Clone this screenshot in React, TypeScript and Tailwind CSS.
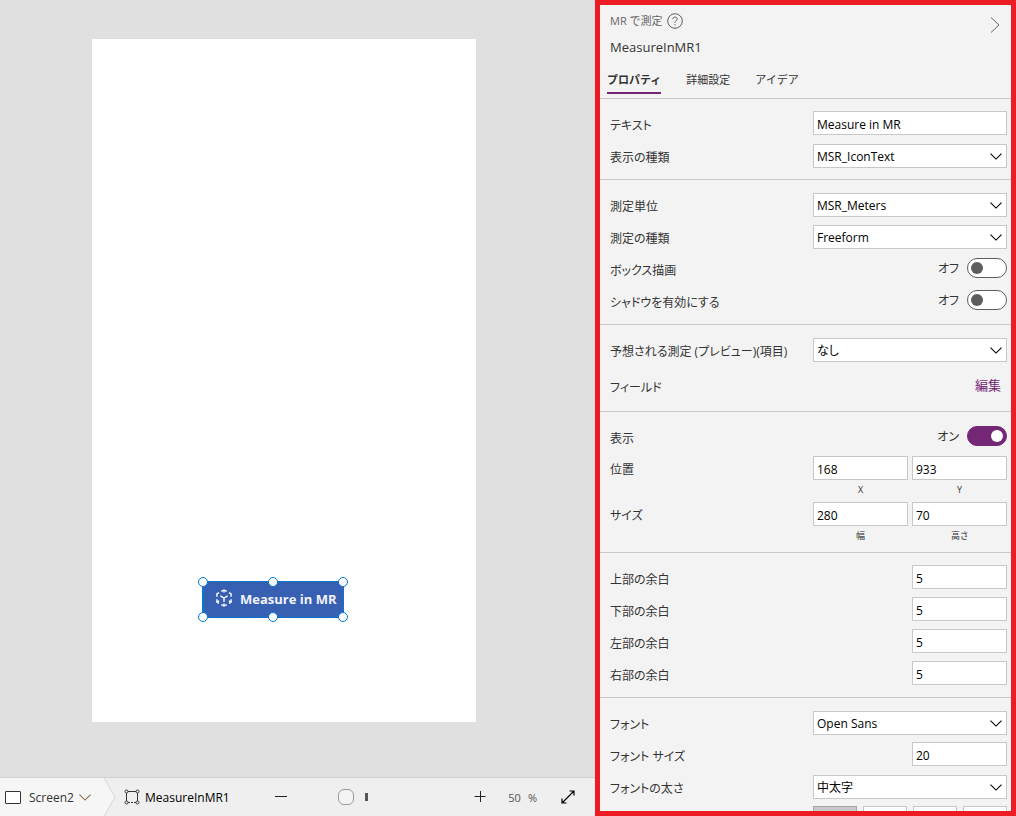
import { useId, useState, type ReactNode } from "react";
import clsx from "clsx";

const FONT = "font-['Open_Sans','Noto_Sans_CJK_JP',sans-serif]";

const TABS = ["プロパティ", "詳細設定", "アイデア"];

const PADDING_FIELDS = ["上部の余白", "下部の余白", "左部の余白", "右部の余白"];

const ALIGNMENTS = ["左揃え", "中央揃え", "右揃え", "両端揃え"];

const INPUT =
  "h-6 w-full min-w-0 border border-[#c8c8c8] bg-white px-[3px] pt-0.5 text-xs text-black outline-none focus:border-[#742774]";

// ── Icons ────────────────────────────────────────────────────────────────────

function ChevronDown({ className }: { className?: string }) {
  return (
    <svg viewBox="0 0 12 7" fill="none" stroke="currentColor" className={clsx("h-[7px] w-3", className)} aria-hidden>
      <path d="M0.5 0.7 6 6.1 11.5 0.7" strokeWidth="1.1" />
    </svg>
  );
}

function CubeIcon() {
  return (
    <svg viewBox="0 0 16 18" fill="none" stroke="#fff" strokeWidth="1.4" className="mb-1 h-[18px] w-4 shrink-0" aria-hidden>
      <path d="M5.3 2.4 8 1l2.7 1.4M13 3.6l2.1 1.2v2.9M15.1 10.3v2.9L13 14.4M10.7 15.6 8 17l-2.7-1.4M3 14.4.9 13.2v-2.9M.9 7.7V4.8L3 3.6" />
      <path d="M8 13V9M8 9 4.4 6.8M8 9l3.6-2.2M8 1v2.6M8 14.4V17M.9 13.2l2.2-1.3M15.1 13.2l-2.2-1.3" />
    </svg>
  );
}

function SelectionIcon() {
  return (
    <svg viewBox="0 0 16 16" fill="none" stroke="#333" className="size-4 shrink-0" aria-hidden>
      <path d="M4 2.5h8M2.5 4v8M13.5 4v8" />
      <path d="M4 13.5h8" strokeDasharray="2 1" />
      <circle cx="2.5" cy="2.5" r="1.5" />
      <circle cx="13.5" cy="2.5" r="1.5" />
      <circle cx="2.5" cy="13.5" r="1.5" />
      <circle cx="13.5" cy="13.5" r="1.5" />
    </svg>
  );
}

// ── Panel building blocks ────────────────────────────────────────────────────

function Section({ children }: { children: ReactNode }) {
  return <section className="border-t border-[#c8c8c8] pt-[9px] pr-1 pb-[7px] pl-2.5">{children}</section>;
}

function Row({ label, htmlFor, children }: { label: string; htmlFor: string; children: ReactNode }) {
  return (
    <div className="flex h-8 items-center justify-between">
      <label htmlFor={htmlFor} className="pt-[3px]">
        {label}
      </label>
      {children}
    </div>
  );
}

function TextRow({ label, value, wide }: { label: string; value: string; wide?: boolean }) {
  const id = useId();
  return (
    <Row label={label} htmlFor={id}>
      <div className={clsx("mb-0.5 flex", wide ? "w-[194px]" : "w-[95px]")}>
        <input id={id} defaultValue={value} className={INPUT} />
      </div>
    </Row>
  );
}

function SelectRow({ label, value }: { label: string; value: string }) {
  const id = useId();
  return (
    <Row label={label} htmlFor={id}>
      <div className="relative flex w-[194px]">
        <select id={id} defaultValue={value} className={clsx(INPUT, "appearance-none")}>
          <option>{value}</option>
        </select>
        <ChevronDown className="pointer-events-none absolute top-[9px] right-[5px] text-black" />
      </div>
    </Row>
  );
}

function ToggleRow({ label, initial }: { label: string; initial: boolean }) {
  const id = useId();
  const [on, setOn] = useState(initial);
  return (
    <Row label={label} htmlFor={id}>
      <div className="mb-0.5 flex items-center gap-2">
        <span className="pt-0.5">{on ? "オン" : "オフ"}</span>
        <input
          id={id}
          type="checkbox"
          role="switch"
          checked={on}
          onChange={(e) => setOn(e.target.checked)}
          className="flex h-5 w-10 appearance-none items-center rounded-full border border-[#605e5c] bg-white px-[3px] before:size-3 before:rounded-full before:bg-[#605e5c] checked:justify-end checked:border-[#742774] checked:bg-[#742774] checked:before:bg-white"
        />
      </div>
    </Row>
  );
}

function PairRow({ label, fields }: { label: string; fields: { name: string; value: string }[] }) {
  const id = useId();
  return (
    <div role="group" aria-labelledby={id} className="flex h-[46px] items-start justify-between pt-[3px]">
      <span id={id} className="pt-[5px]">
        {label}
      </span>
      <div className="flex w-[194px] gap-1">
        {fields.map((f) => (
          <label key={f.name} className="flex flex-1 flex-col-reverse text-center text-[9px] leading-5">
            {f.name}
            <input defaultValue={f.value} className={INPUT} />
          </label>
        ))}
      </div>
    </div>
  );
}

function PropertiesPanel() {
  const [tab, setTab] = useState(TABS[0]);

  return (
    <aside className="flex w-[421px] shrink-0 flex-col overflow-hidden border-[5px] border-[#ed1c24] bg-[#f3f3f3] text-xs leading-[18px] text-[#333]">
      <header className="flex justify-between pt-2 pr-[11px] pl-2.5">
        <div>
          <div className="flex items-center gap-1 text-[11px] leading-4 text-[#666]">
            <span>MR で測定</span>
            <button type="button" aria-label="ヘルプ">
              <svg viewBox="0 0 16 16" fill="none" stroke="#605e5c" className="size-4" aria-hidden>
                <circle cx="8" cy="8" r="7.3" />
                <path d="M5.8 6.2C5.8 4.8 6.8 4 8 4s2.2.8 2.2 2c0 1.7-2.2 1.8-2.2 3.7M8 11v1.2" />
              </svg>
            </button>
          </div>
          <h1 className="mt-2 text-[13px] leading-5">MeasureInMR1</h1>
        </div>
        <button type="button" aria-label="パネルを折りたたむ" className="mt-1 self-start">
          <svg viewBox="0 0 10 16" fill="none" stroke="#666" className="h-4 w-2.5" aria-hidden>
            <path d="M1 .5 9 8l-8 7.5" />
          </svg>
        </button>
      </header>

      <div role="tablist" className="mt-3 mb-1 flex gap-[25px] px-[7px] text-[11px]">
        {TABS.map((t) => (
          <button
            key={t}
            type="button"
            role="tab"
            aria-selected={t === tab}
            onClick={() => setTab(t)}
            className={clsx(
              "border-b-2 pt-0.5 pb-[3px]",
              t === tab ? "border-[#742774] font-bold" : "border-transparent",
            )}
          >
            {t}
          </button>
        ))}
      </div>

      <div className="min-h-0 flex-1 overflow-hidden [font-feature-settings:'palt']">
        <Section>
          <TextRow label="テキスト" value="Measure in MR" wide />
          <SelectRow label="表示の種類" value="MSR_IconText" />
        </Section>

        <Section>
          <SelectRow label="測定単位" value="MSR_Meters" />
          <SelectRow label="測定の種類" value="Freeform" />
          <ToggleRow label="ボックス描画" initial={false} />
          <ToggleRow label="シャドウを有効にする" initial={false} />
        </Section>

        <Section>
          <SelectRow label="予想される測定 (プレビュー)(項目)" value="なし" />
          <div className="flex h-[38px] items-center justify-between">
            <span className="pt-[5px]">フィールド</span>
            <a href="#fields" className="mr-1.5 text-[13px] text-[#742774]">
              編集
            </a>
          </div>
        </Section>

        <Section>
          <ToggleRow label="表示" initial />
          <PairRow
            label="位置"
            fields={[
              { name: "X", value: "168" },
              { name: "Y", value: "933" },
            ]}
          />
          <PairRow
            label="サイズ"
            fields={[
              { name: "幅", value: "280" },
              { name: "高さ", value: "70" },
            ]}
          />
        </Section>

        <Section>
          {PADDING_FIELDS.map((label) => (
            <TextRow key={label} label={label} value="5" />
          ))}
        </Section>

        <Section>
          <SelectRow label="フォント" value="Open Sans" />
          <TextRow label="フォント サイズ" value="20" />
          <SelectRow label="フォントの太さ" value="中太字" />
          <div className="ml-auto grid w-[194px] grid-cols-4 gap-1.5 pt-[3px]">
            {ALIGNMENTS.map((name, i) => (
              <button
                key={name}
                type="button"
                aria-label={name}
                className={clsx("h-6 border", i === 0 ? "border-[#a6a6a6] bg-[#c8c8c8]" : "border-[#c8c8c8] bg-white")}
              />
            ))}
          </div>
        </Section>
      </div>
    </aside>
  );
}

// ── Canvas ───────────────────────────────────────────────────────────────────

function HandleRow({ className }: { className: string }) {
  return (
    <div className={clsx("absolute -inset-x-1 flex justify-between", className)}>
      {[0, 1, 2].map((i) => (
        <span key={i} className="size-2.5 rounded-full border border-[#0078d4] bg-white" />
      ))}
    </div>
  );
}

function Canvas() {
  return (
    <main className="flex min-h-0 flex-1 justify-center bg-[#e0e0e0] pt-[39px] pr-[27px] pb-[55px]">
      <div className="relative w-[384px] bg-white">
        <div className="absolute top-[542px] left-[110px] h-[37px] w-[142px]">
          <button
            type="button"
            className="flex size-full items-center gap-2 border border-l-2 border-[#0f72cc] bg-[#3860b2] pt-px pl-3 font-['Open_Sans',sans-serif] text-[13px] font-bold whitespace-nowrap text-[#f0f3fa]"
          >
            <CubeIcon />
            Measure in MR
          </button>
          <HandleRow className="-top-1" />
          <HandleRow className="-bottom-1" />
        </div>
      </div>
    </main>
  );
}

function StatusBar() {
  return (
    <footer className="flex h-[39px] items-center border-t border-[#d0d0d0] bg-[#efefef] text-xs">
      <button type="button" className="flex h-full w-[104px] shrink-0 items-center bg-[#f6f6f6] pl-[5px] text-[#333]">
        <span className="h-[13px] w-4 rounded-[1px] border border-[#333] bg-white" />
        <span className="ml-2 pt-0.5">Screen2</span>
        <ChevronDown className="ml-[5px] text-[#8a6a50]" />
      </button>
      <svg viewBox="0 0 12 38" className="h-full w-3 shrink-0" aria-hidden>
        <path d="M0 0 11 19 0 38Z" fill="#f6f6f6" />
        <path d="M0 0 11 19 0 38" fill="none" stroke="#d6d6d6" />
      </svg>
      <div className="ml-2 flex items-center gap-[5px] text-black">
        <SelectionIcon />
        <span className="pt-0.5">MeasureInMR1</span>
      </div>

      <div className="ml-auto flex items-center pr-5">
        <button type="button" aria-label="縮小">
          <svg viewBox="0 0 12 12" stroke="#222" className="mb-0.5 size-3" aria-hidden>
            <path d="M0 6.5h12" />
          </svg>
        </button>
        <div className="relative mr-[15px] ml-4 flex w-[156px] items-center">
          <input
            type="range"
            aria-label="ズーム"
            defaultValue={25}
            className="h-4 w-full appearance-none bg-transparent [&::-webkit-slider-thumb]:size-4 [&::-webkit-slider-thumb]:appearance-none [&::-webkit-slider-thumb]:rounded-[6px] [&::-webkit-slider-thumb]:border [&::-webkit-slider-thumb]:border-[#999] [&::-webkit-slider-thumb]:bg-[#f3f3f3]"
          />
          <span className="pointer-events-none absolute left-[62px] h-2 w-[3px] bg-[#555]" />
        </div>
        <button type="button" aria-label="拡大">
          <svg viewBox="0 0 12 12" stroke="#222" className="mb-0.5 size-3" aria-hidden>
            <path d="M.5 6.5h11M6.5 1v11" />
          </svg>
        </button>
        <span className="ml-[22px] pt-0.5 text-[11px] text-[#555]">50</span>
        <span className="ml-[7px] pt-0.5 text-[11px] text-[#555]">%</span>
        <button type="button" aria-label="画面に合わせる" className="ml-6">
          <svg viewBox="0 0 14 14" fill="none" stroke="#000" className="size-3.5" aria-hidden>
            <path d="M1 13 13 1M8.5 1H13v4.5M1 8.5V13h4.5" strokeWidth="1.2" />
          </svg>
        </button>
      </div>
    </footer>
  );
}

export default function App() {
  return (
    <div className={clsx("flex h-screen overflow-hidden", FONT)}>
      <div className="flex min-w-0 flex-1 flex-col">
        <Canvas />
        <StatusBar />
      </div>
      <PropertiesPanel />
    </div>
  );
}
